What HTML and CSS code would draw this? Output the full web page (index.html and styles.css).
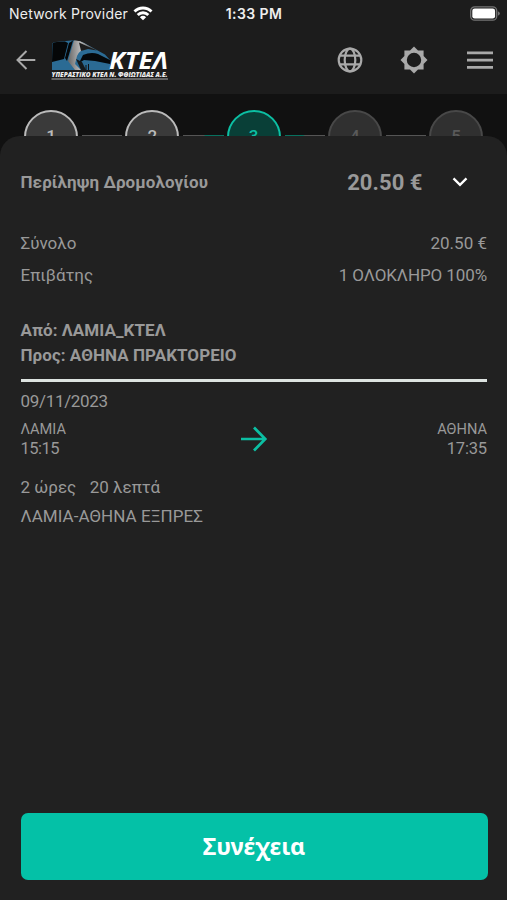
FILE: index.html
```html
<!DOCTYPE html>
<html lang="el">
<head>
<meta charset="utf-8">
<title>ΚΤΕΛ</title>
<link rel="stylesheet" href="styles.css">
</head>
<body>
<div class="status">
  <div class="carrier"><span class="carrier-name">Network Provider</span>
    <svg width="20" height="15" viewBox="0 0 20 15" fill="none" stroke="#fff" stroke-width="2.9"><path d="M1.500 5.600a12 12 0 0 1 17 0M4.700 9a7.500 7.500 0 0 1 10.600 0"/><path d="M10 14.200 6.900 11.200a4.500 4.500 0 0 1 6.200 0z" fill="#fff" stroke="none"/></svg>
  </div>
  <div class="clock">1:33 PM</div>
  <svg class="battery" width="30" height="15" viewBox="0 0 30 15"><rect x=".7" y=".8" width="26" height="13.400" rx="4" fill="none" stroke="#747474" stroke-width="1.300"/><rect x="2.300" y="2.400" width="22.800" height="10.200" rx="2.400" fill="#fff"/><path d="M27.900 5.200q2 .9 2 2.300t-2 2.300z" fill="#747474"/></svg>
</div>
<header class="bar">
  <svg class="back" width="20" height="20" viewBox="0 0 20 20" fill="none" stroke="#a9a9a9" stroke-width="2"><path d="M19.300 10H2M10.500 1 1.500 10l9 9"/></svg>
  <svg class="logo" width="122" height="46" viewBox="0 0 122 46">
    <defs><linearGradient id="chrome" x1="0" x2="1"><stop offset="0" stop-color="#666"/><stop offset=".45" stop-color="#bbb"/><stop offset="1" stop-color="#333"/></linearGradient></defs>
    <path d="M1 6Q1 3 5 3L20 1.500Q28 1 33 4L54 15.500 59 21V31H1z" fill="#2b6b94"/>
    <path d="M1.500 5Q2 3 6 3L14 2.500 17 4 13 20 1 23z" fill="#050708"/>
    <path d="M18 4 22 1.500 19 12 16 22 14 19z" fill="#050708"/>
    <path d="M23 1.500Q29 1 33 4L45 11 36 9.500Q28 11 26 17L24 25 30 31H24L17 22z" fill="url(#chrome)"/>
    <path d="M28 3.500 46 11.500 37 10 30 12z" fill="#1c1c1c"/>
    <path d="M32 16Q40 12.500 47 15L59 21V25L44 22 33 21 28 24z" fill="#05080a"/>
    <path d="M25 20 31 23 35 31H30z" fill="#15191b"/>
    <path d="M35 26v5M37.500 25v6" stroke="#111" stroke-width="1"/>
    <text class="logo-name" x="58" y="30" textLength="59" lengthAdjust="spacingAndGlyphs">ΚΤΕΛ</text>
    <text class="logo-sub" x=".5" y="38" textLength="116" lengthAdjust="spacingAndGlyphs">ΥΠΕΡΑΣΤΙΚΟ ΚΤΕΛ Ν. ΦΘΙΩΤΙΔΑΣ Α.Ε.</text>
    <path d="M.5 40H117" stroke="#aaa" stroke-width="1"/>
  </svg>
  <svg class="globe" width="26" height="26" viewBox="0 0 26 26" fill="none" stroke="#a9a9a9" stroke-width="2.200"><circle cx="13" cy="13" r="11.300"/><ellipse cx="13" cy="13" rx="5.300" ry="11.300"/><path d="M2.500 8.600h21M2.500 17.400h21"/></svg>
  <svg class="sun" width="28" height="28" viewBox="0 0 28 28"><path fill="#a9a9a9" fill-rule="evenodd" d="M14 .5 18 4.400h5.600V10l3.900 4-3.900 4v5.600H18l-4 3.900-4-3.900H4.400V18L.5 14l3.900-4V4.400H10zM14 6.800a7.200 7.200 0 1 0 0 14.400 7.200 7.200 0 0 0 0-14.400z"/></svg>
  <svg class="menu" width="26" height="18" viewBox="0 0 26 18" stroke="#a9a9a9" stroke-width="2.700"><path d="M0 1.900h26M0 9.200h26M0 16.300h26"/></svg>
</header>
<div class="steps">
  <span class="step done">1</span><i class="link"></i>
  <span class="step done">2</span><i class="link to-active"></i>
  <span class="step active">3</span><i class="link from-active"></i>
  <span class="step">4</span><i class="link"></i>
  <span class="step">5</span>
</div>
<main class="panel">
  <div class="summary">
    <h1 class="title">Περίληψη Δρομολογίου</h1>
    <span class="price">20.50 €</span>
    <svg width="16" height="10" viewBox="0 0 16 10" fill="none" stroke="#fff" stroke-width="2.300"><path d="M1.500 1.400 8 7.900l6.500-6.500"/></svg>
  </div>
  <div class="row"><span>Σύνολο</span><span>20.50 €</span></div>
  <div class="row"><span>Επιβάτης</span><span class="fare">1 ΟΛΟΚΛΗΡΟ 100%</span></div>
  <div class="route">
    <div>Από: ΛΑΜΙΑ_ΚΤΕΛ</div>
    <div>Προς: ΑΘΗΝΑ ΠΡΑΚΤΟΡΕΙΟ</div>
  </div>
  <div class="date">09/11/2023</div>
  <div class="trip">
    <div class="stop"><span class="city">ΛΑΜΙΑ</span><span class="time">15:15</span></div>
    <svg width="26" height="26" viewBox="0 0 26 26" fill="none" stroke="#0cbfa3" stroke-width="2.700"><path d="M0 13h23.500M13 1.500 24.300 13 13 24.500"/></svg>
    <div class="stop end"><span class="city">ΑΘΗΝΑ</span><span class="time">17:35</span></div>
  </div>
  <div class="duration"><span>2 ώρες</span><span>20 λεπτά</span></div>
  <div class="line">ΛΑΜΙΑ-ΑΘΗΝΑ ΕΞΠΡΕΣ</div>
  <button class="next">Συνέχεια</button>
</main>
</body>
</html>
```
FILE: styles.css
```css
* { box-sizing: border-box; }
body {
  margin: 0;
  height: 900px;
  display: flex;
  flex-direction: column;
  overflow: hidden;
  background: #111;
  color: #999;
  font: 17px/24px Roboto, sans-serif;
}
svg { display: block; flex: none; overflow: visible; }
.status {
  height: 28px;
  padding: 0 7px 0 9px;
  display: grid;
  grid-template-columns: 1fr auto 1fr;
  align-items: center;
  background: #1c1c1c;
  color: #eee;
  font: 14px/28px Inter, sans-serif;
}
.carrier { display: flex; align-items: center; gap: 5px; white-space: nowrap; }
.carrier svg { margin-top: -2px; }
.carrier-name { letter-spacing: .22px; }
.clock { font-weight: 600; font-size: 14px; letter-spacing: .4px; margin-right: 1px; }
.battery { justify-self: end; margin-top: -2px; }
.bar {
  height: 66px;
  padding: 0 14px 2px 16px;
  display: flex;
  align-items: center;
  background: #1c1c1c;
}
.logo { margin-left: 15px; margin-top: 3px; }
.logo-name { font: italic 700 23px "Open Sans", sans-serif; fill: #fff; }
.logo-sub { font: italic 800 7px "Open Sans", sans-serif; fill: #eee; }
.globe { margin-left: auto; }
.sun { margin-left: 37px; }
.menu { margin-left: 39px; }
.steps {
  flex: none;
  height: 76px;
  padding: 15.500px 24px 0;
  display: flex;
  align-items: flex-start;
}
.step {
  flex: none;
  width: 54px;
  height: 54px;
  border: 2px solid #484848;
  border-radius: 50%;
  background: #303030;
  color: #5a5a5a;
  font-weight: 500;
  line-height: 48px;
  text-align: center;
}
.done { border-color: #bbb; background: #3a3a3a; color: #bbb; }
.active { border-color: #0cbfa3; background: #093f37; color: #0cbfa3; }
.link { flex: 1; height: 2px; margin: 25.500px 3px 0 4px; background: #555; }
.to-active { background: linear-gradient(90deg, #555 50%, #08715f 55%); }
.from-active { background: linear-gradient(90deg, #08715f 45%, #555 50%); }
.panel {
  position: relative;
  flex: 1;
  margin-top: -34px;
  padding: 0 20px 20px 20.500px;
  display: flex;
  flex-direction: column;
  border-radius: 20px 20px 0 0;
  background: #212121;
}
.summary { height: 92px; display: flex; align-items: center; padding-right: 19px; }
.title { margin: 0; font-size: 17px; font-weight: 700; letter-spacing: .08px; }
.price { margin: 2px 29.500px 0 auto; font-size: 22px; font-weight: 700; letter-spacing: .05px; }
.row { height: 32px; position: relative; top: -1px; display: flex; align-items: center; justify-content: space-between; }
.fare { letter-spacing: -.1px; }
.route {
  margin-top: 26px;
  padding: 0 0 11px;
  border-bottom: 3px solid #dde3e0;
  font-weight: 700;
  line-height: 25px;
  letter-spacing: .06px;
}
.date { padding-top: 7px; letter-spacing: -.32px; }
.trip { height: 50px; display: flex; justify-content: space-between; align-items: center; }
.trip svg { margin-left: 5px; margin-top: 1px; }
.stop { display: flex; flex-direction: column; align-items: flex-start; padding-top: 2px; line-height: 19px; }
.end { align-items: flex-end; }
.city { font-size: 14.600px; }
.time { font-size: 16.500px; letter-spacing: -.5px; }
.end .time { letter-spacing: -.15px; }
.duration { height: 30px; margin-top: 9px; display: flex; align-items: center; gap: 13.500px; }
.line { line-height: 29px; letter-spacing: .05px; }
.next {
  height: 67.500px;
  margin-top: auto;
  margin-right: -.5px;
  padding: 0;
  border: 0;
  border-radius: 7px;
  background: #04c1a7;
  color: #fff;
  font: 700 23.300px "Noto Sans", sans-serif;
}
```
